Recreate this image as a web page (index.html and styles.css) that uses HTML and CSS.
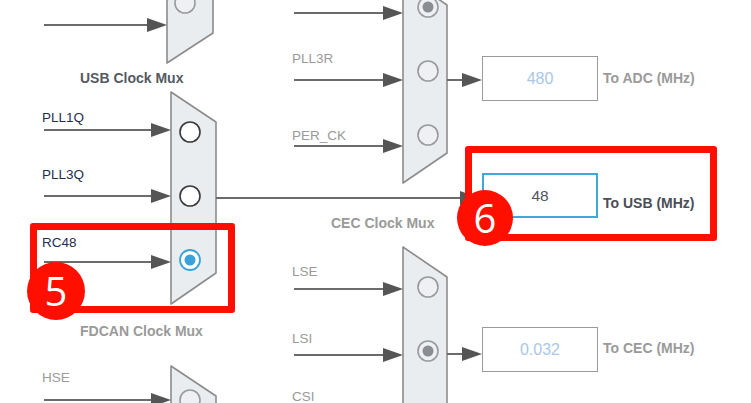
FILE: index.html
```html
<!DOCTYPE html>
<html>
<head>
<meta charset="utf-8">
<link rel="stylesheet" href="styles.css">
</head>
<body>
<div class="canvas">
  <svg class="wires" width="751" height="403" viewBox="0 0 751 403">
    <g class="mux">
      <path d="M167,-40 L213,-10 L213,33 L167,63 Z"/>
      <path d="M171,92 L216,122 L216,273 L171,304 Z"/>
      <path d="M403,-25 L447,5 L447,153 L403,183 Z"/>
      <path d="M403,247 L447,277 L447,420 L403,420 Z"/>
      <path d="M171,366 L216,396 L216,420 L171,420 Z"/>
    </g>
    <g class="opt">
      <circle cx="185" cy="3" r="10"/>
      <circle cx="428" cy="71" r="10"/>
      <circle cx="428" cy="135" r="10"/>
      <circle cx="428" cy="287" r="10"/>
      <circle cx="190" cy="400" r="10"/>
    </g>
    <g class="opt-sel">
      <circle cx="428" cy="7" r="10"/>
      <circle cx="428" cy="351" r="10"/>
    </g>
    <g class="dot-sel">
      <circle cx="428" cy="7" r="5.5"/>
      <circle cx="428" cy="351" r="5.5"/>
    </g>
    <g class="opt-on">
      <circle cx="190" cy="132" r="10"/>
      <circle cx="190" cy="196" r="10"/>
    </g>
    <circle class="opt-blue" cx="190" cy="260" r="10"/>
    <circle class="dot-blue" cx="190" cy="260" r="5.5"/>
    <g class="line">
      <line x1="44" y1="25" x2="150" y2="25"/>
      <line x1="44" y1="130" x2="154" y2="130"/>
      <line x1="44" y1="196" x2="154" y2="196"/>
      <line x1="44" y1="262" x2="154" y2="262"/>
      <line x1="44" y1="400" x2="154" y2="400"/>
      <line x1="294" y1="13" x2="386" y2="13"/>
      <line x1="294" y1="80" x2="386" y2="80"/>
      <line x1="294" y1="146" x2="386" y2="146"/>
      <line x1="294" y1="289" x2="386" y2="289"/>
      <line x1="294" y1="355" x2="386" y2="355"/>
      <line x1="447" y1="80" x2="464" y2="80"/>
      <line x1="216" y1="198" x2="462" y2="198"/>
      <line x1="447" y1="354" x2="464" y2="354"/>
    </g>
    <g class="head">
      <polygon points="167,25 147,18 147,32"/>
      <polygon points="171,130 151,123 151,137"/>
      <polygon points="171,196 151,189 151,203"/>
      <polygon points="171,262 151,255 151,269"/>
      <polygon points="171,400 151,393 151,407"/>
      <polygon points="403,13 383,6 383,20"/>
      <polygon points="403,80 383,73 383,87"/>
      <polygon points="403,146 383,139 383,153"/>
      <polygon points="403,289 383,282 383,296"/>
      <polygon points="403,355 383,348 383,362"/>
      <polygon points="482,80 462,73 462,87"/>
      <polygon points="480,198 460,191 460,205"/>
      <polygon points="482,354 462,347 462,361"/>
    </g>
  </svg>

  <div class="lbl dark l-pll1q">PLL1Q</div>
  <div class="lbl dark l-pll3q">PLL3Q</div>
  <div class="lbl dark l-rc48">RC48</div>
  <div class="lbl l-hse">HSE</div>
  <div class="lbl l-pll3r">PLL3R</div>
  <div class="lbl l-perck">PER_CK</div>
  <div class="lbl l-lse">LSE</div>
  <div class="lbl l-lsi">LSI</div>
  <div class="lbl l-csi">CSI</div>

  <div class="mux-title strong t-usb">USB Clock Mux</div>
  <div class="mux-title t-cec">CEC Clock Mux</div>
  <div class="mux-title t-fdcan">FDCAN Clock Mux</div>

  <div class="box b-adc">480</div>
  <div class="box active b-usb">48</div>
  <div class="box b-cec">0.032</div>

  <div class="out o-adc">To ADC (MHz)</div>
  <div class="out strong o-usb">To USB (MHz)</div>
  <div class="out o-cec">To CEC (MHz)</div>

  <div class="mark m5"></div>
  <div class="mark m6"></div>
  <div class="badge g5">5</div>
  <div class="badge g6">6</div>
</div>
</body>
</html>
```

FILE: styles.css
```css
html, body {
  margin: 0;
  padding: 0;
  background: #ffffff;
}

.canvas {
  position: relative;
  width: 751px;
  height: 403px;
  overflow: hidden;
  background: #ffffff;
  font-family: "Liberation Sans", Arial, sans-serif;
}

.wires {
  position: absolute;
  left: 0;
  top: 0;
}

.mux path {
  fill: #eaedf0;
  stroke: #8c8c8c;
  stroke-width: 1.6;
  stroke-linejoin: round;
}

.opt circle {
  fill: #eef0f3;
  stroke: #9a9a9a;
  stroke-width: 1.6;
}

.opt-sel circle {
  fill: #eef0f3;
  stroke: #9a9a9a;
  stroke-width: 1.6;
}

.dot-sel circle {
  fill: #8a8d92;
}

.opt-on circle {
  fill: #ffffff;
  stroke: #3a3a3a;
  stroke-width: 1.6;
}

.opt-blue {
  fill: #ffffff;
  stroke: #3aa3da;
  stroke-width: 1.8;
}

.dot-blue {
  fill: #3aa3da;
}

.line line {
  stroke: #6b6b6b;
  stroke-width: 2;
}

.head polygon {
  fill: #555555;
}

.lbl {
  position: absolute;
  font-size: 13.5px;
  line-height: 1;
  color: #9a9a9a;
  white-space: nowrap;
}

.lbl.dark {
  color: #1f2d52;
}

.l-pll1q { left: 42px; top: 111px; }
.l-pll3q { left: 42px; top: 168px; }
.l-rc48  { left: 42px; top: 236px; }
.l-hse   { left: 42px; top: 371px; }
.l-pll3r { left: 292px; top: 52px; }
.l-perck { left: 292px; top: 129px; }
.l-lse   { left: 292px; top: 265px; }
.l-lsi   { left: 292px; top: 332px; }
.l-csi   { left: 292px; top: 390px; }

.mux-title {
  position: absolute;
  font-size: 14px;
  font-weight: bold;
  line-height: 1;
  color: #9a9a9a;
  white-space: nowrap;
}

.mux-title.strong {
  color: #555a62;
}

.t-usb   { left: 80px; top: 71px; }
.t-cec   { left: 331px; top: 216px; }
.t-fdcan { left: 80px; top: 324px; }

.box {
  position: absolute;
  box-sizing: border-box;
  width: 116px;
  height: 45px;
  border: 1.5px solid #9a9a9a;
  background: #ffffff;
  display: flex;
  align-items: center;
  justify-content: center;
  font-size: 16px;
  color: #aac8e6;
}

.box.active {
  border: 2px solid #3ea8da;
  color: #505560;
  font-size: 15.5px;
}

.b-adc { left: 482px; top: 56px; }
.b-usb { left: 482px; top: 173px; width: 116px; height: 45px; }
.b-cec { left: 482px; top: 327px; }

.out {
  position: absolute;
  font-size: 14px;
  font-weight: bold;
  line-height: 1;
  color: #9a9a9a;
  white-space: nowrap;
}

.out.strong {
  color: #4a4e56;
}

.o-adc { left: 603px; top: 71px; }
.o-usb { left: 603px; top: 196px; }
.o-cec { left: 603px; top: 341px; }

.mark {
  position: absolute;
  box-sizing: border-box;
  border: 7px solid #fe0f00;
  border-radius: 3px;
}

.m5 { left: 30px; top: 223px; width: 205px; height: 90px; }
.m6 { left: 465px; top: 146px; width: 252px; height: 95px; }

.badge {
  position: absolute;
  border-radius: 50%;
  background: #fe0f00;
  color: #ffffff;
  display: flex;
  align-items: center;
  justify-content: center;
  font-family: "Open Sans", "Liberation Sans", sans-serif;
  font-size: 40px;
  line-height: 1;
}

.g5 { left: 27px; top: 262px; width: 58px; height: 58px; }
.g6 { left: 457px; top: 190px; width: 56px; height: 56px; }
```
